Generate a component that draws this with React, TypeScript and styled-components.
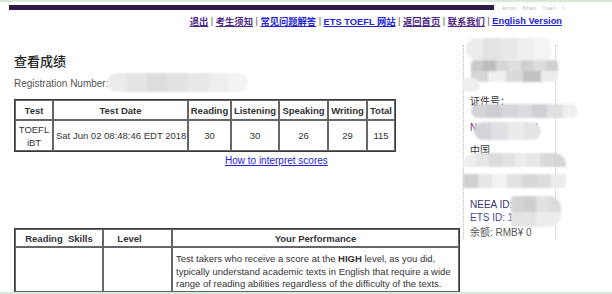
import React from 'react';
import styled, { createGlobalStyle } from 'styled-components';

const GlobalStyle = createGlobalStyle`
  html, body {
    margin: 0;
    padding: 0;
    background: #fff;
  }
  body {
    font-family: "Liberation Sans", Arial, "Noto Sans CJK SC", sans-serif;
    color: #333;
  }
`;

const Frame = styled.div`
  width: 612px;
  height: 294px;
  box-sizing: border-box;
  border-top: 2px solid #d6ead8;
  border-bottom: 2px solid #d6ead8;
  overflow: hidden;
`;

const TopBar = styled.div`
  display: flex;
  align-items: center;
  padding: 3px 0 0 9px;
  height: 5px;
`;

const PurpleBar = styled.div`
  width: 485px;
  height: 5px;
  background: #2e1a47;
`;

const UserText = styled.span`
  margin-left: 8px;
  font-size: 5px;
  color: #b5b5b5;
  letter-spacing: 0.5px;
  word-spacing: 4px;
`;

const Nav = styled.nav`
  display: flex;
  justify-content: flex-end;
  align-items: center;
  margin-top: 4px;
  padding-right: 50px;
  height: 14px;
  font-size: 9.3px;
  font-weight: bold;
  white-space: nowrap;
`;

const NavLink = styled.a<{ $color: string }>`
  color: ${(p) => p.$color};
  text-decoration: underline;
`;

const Sep = styled.span`
  color: #555;
  font-weight: normal;
  margin: 0 2.5px;
`;

const Main = styled.div`
  display: flex;
  align-items: flex-start;
`;

const LeftCol = styled.div`
  width: 463px;
  padding-left: 14px;
  box-sizing: border-box;
`;

const Heading = styled.h1`
  margin: 25px 0 0;
  font-size: 13px;
  line-height: 16px;
  font-weight: 500;
  color: #222;
  font-family: "Noto Sans CJK SC", sans-serif;
`;

const RegLine = styled.div`
  position: relative;
  margin-top: 9px;
  font-size: 10px;
  line-height: 12px;
  color: #555;
`;

const Blob = styled.div<{ $x: number; $y: number; $w: number; $h: number; $r?: string }>`
  position: absolute;
  left: ${(p) => p.$x}px;
  top: ${(p) => p.$y}px;
  width: ${(p) => p.$w}px;
  height: ${(p) => p.$h}px;
  display: flex;
  flex-wrap: wrap;
  border-radius: ${(p) => p.$r || '8px'};
  overflow: hidden;
  filter: blur(1.2px);
`;

const Tile = styled.div<{ $c: string; $rows: number }>`
  flex: 1 0 auto;
  min-width: 12px;
  height: ${(p) => 100 / p.$rows}%;
  background: ${(p) => p.$c};
`;

const ScoreTable = styled.table`
  margin-top: 9px;
  width: 380px;
  table-layout: fixed;
  border-collapse: separate;
  border-spacing: 0;
  border: 1px solid #3a3a3a;
  font-size: 9.5px;
  color: #333;
`;

const Col = styled.col<{ $w: number }>`
  width: ${(p) => p.$w}px;
`;

const Th = styled.th<{ $h?: number; $pr?: number }>`
  border: 1px solid #666;
  height: ${(p) => p.$h || 16}px;
  padding: 0 ${(p) => p.$pr || 0}px 0 0;
  font-weight: bold;
  text-align: center;
  white-space: nowrap;
`;

const Td = styled.td<{ $h?: number; $align?: string }>`
  border: 1px solid #666;
  height: ${(p) => p.$h || 29}px;
  padding: 0 2px;
  text-align: ${(p) => p.$align || 'center'};
  line-height: 13px;
  white-space: nowrap;
`;

const LinkRow = styled.div`
  margin-top: 3px;
  padding-left: 211px;
  font-size: 10px;
  line-height: 12px;
`;

const BlueLink = styled.a`
  color: #2323d6;
  text-decoration: underline;
`;

const SkillTable = styled(ScoreTable)`
  margin-top: 61px;
  width: 444px;
`;

const TextCell = styled.td`
  border: 1px solid #666;
  padding: 5px 3px 0;
  vertical-align: top;
  line-height: 12.5px;
  white-space: nowrap;
`;

const Sidebar = styled.aside`
  position: relative;
  margin-top: 17px;
  width: 93px;
  padding-left: 6px;
  box-sizing: border-box;
  border-left: 1px dotted #bdbdbd;
  border-right: 1px dotted #bdbdbd;
  font-size: 10px;
  line-height: 13px;
  font-family: "Liberation Sans", Arial, "Noto Sans CJK SC", sans-serif;
`;

const SideLine = styled.div<{ $mt: number; $color?: string }>`
  margin-top: ${(p) => p.$mt}px;
  color: ${(p) => p.$color || '#333'};
  white-space: nowrap;
`;

type BlobSpec = { x: number; y: number; w: number; h: number; r?: string; rows: number; tiles: string[] };

const sideBlobs: BlobSpec[] = [
  { x: 2, y: -7, w: 85, h: 22, r: '11px 4px 4px 11px', rows: 1, tiles: ['#ececec', '#e3e3e3', '#e8e8e8', '#efefef', '#f4f4f4'] },
  { x: 7, y: 15, w: 87, h: 22, r: '4px', rows: 2, tiles: ['#cbcbcb', '#bdbdbd', '#d6d6d6', '#dedede', '#d0d0d0', '#dcdcdc', '#d0d0d0', '#d6d6d6', '#f0f0f0', '#dadada', '#c2c2c2', '#ececec'] },
  { x: -2, y: 33, w: 18, h: 14, r: '7px', rows: 1, tiles: ['#eeeeee'] },
  { x: 7, y: 59, w: 107, h: 14, r: '7px', rows: 1, tiles: ['#d5d3d8', '#cfcdd3', '#d8d6db', '#dcdade', '#d2d0d6', '#e0dfe2', '#efefef'] },
  { x: 10, y: 77, w: 67, h: 18, r: '9px', rows: 1, tiles: ['#d6d4d8', '#e0dfe3', '#ebeaec', '#e4e3e6'] },
  { x: -1, y: 108, w: 103, h: 42, r: '12px', rows: 3, tiles: ['#efefef', '#e6e6e6', '#dcdcdc', '#e2e2e2', '#ececec', '#e8e8e8', '#dadada', '#d6d6d6', '#d0d0d0', '#e6e6e6', '#f2f2f2', '#e2e2e2', '#d8d8d8', '#dcdcdc', '#ececec'] },
  { x: 47, y: 151, w: 50, h: 31, r: '4px 12px 12px 4px', rows: 2, tiles: ['#d4d4d4', '#cfcfcf', '#e2e2e2', '#dcdcdc', '#e4e4e4', '#ececec'] },
];

const regBlob: BlobSpec = {
  x: 93, y: -5, w: 141, h: 19, r: '10px', rows: 1,
  tiles: ['#ececec', '#e4e4e4', '#dddddd', '#e2e2e2', '#e8e8e8', '#eeeeee', '#f3f3f3'],
};

const Mosaic: React.FC<{ spec: BlobSpec }> = ({ spec }) => (
  <Blob $x={spec.x} $y={spec.y} $w={spec.w} $h={spec.h} $r={spec.r}>
    {spec.tiles.map((c, i) => (
      <Tile key={i} $c={c} $rows={spec.rows} />
    ))}
  </Blob>
);

const PURPLE = '#4e2a84';
const BLUE = '#2222d8';

const navItems = [
  { text: '退出', color: PURPLE },
  { text: '考生须知', color: PURPLE },
  { text: '常见问题解答', color: BLUE },
  { text: 'ETS TOEFL 网站', color: BLUE },
  { text: '返回首页', color: PURPLE },
  { text: '联系我们', color: PURPLE },
  { text: 'English Version', color: BLUE },
];

export default function App() {
  return (
    <Frame>
      <GlobalStyle />
      <TopBar>
        <PurpleBar />
        <UserText>Arron Nhan Yuan &gt;</UserText>
      </TopBar>
      <Nav>
        {navItems.map((item, i) => (
          <React.Fragment key={item.text}>
            {i > 0 && <Sep>|</Sep>}
            <NavLink $color={item.color}>{item.text}</NavLink>
          </React.Fragment>
        ))}
      </Nav>
      <Main>
        <LeftCol>
          <Heading>查看成绩</Heading>
          <RegLine>
            Registration Number:
            <Mosaic spec={regBlob} />
          </RegLine>
          <ScoreTable>
            <colgroup>
              <Col $w={38} />
              <Col $w={135} />
              <Col $w={43} />
              <Col $w={48} />
              <Col $w={49} />
              <Col $w={39} />
              <Col $w={28} />
            </colgroup>
            <thead>
              <tr>
                <Th $h={18}>Test</Th>
                <Th $h={18}>Test Date</Th>
                <Th $h={18}>Reading</Th>
                <Th $h={18}>Listening</Th>
                <Th $h={18}>Speaking</Th>
                <Th $h={18}>Writing</Th>
                <Th $h={18}>Total</Th>
              </tr>
            </thead>
            <tbody>
              <tr>
                <Td>
                  TOEFL
                  <br />
                  iBT
                </Td>
                <Td>Sat Jun 02 08:48:46 EDT 2018</Td>
                <Td>30</Td>
                <Td>30</Td>
                <Td>26</Td>
                <Td>29</Td>
                <Td>115</Td>
              </tr>
            </tbody>
          </ScoreTable>
          <LinkRow>
            <BlueLink>How to interpret scores</BlueLink>
          </LinkRow>
          <SkillTable>
            <colgroup>
              <Col $w={88} />
              <Col $w={69} />
              <Col $w={287} />
            </colgroup>
            <thead>
              <tr>
                <Th $h={16}>Reading&nbsp;&nbsp;Skills</Th>
                <Th $h={16} $pr={16}>Level</Th>
                <Th $h={16}>Your Performance</Th>
              </tr>
            </thead>
            <tbody>
              <tr>
                <TextCell />
                <TextCell />
                <TextCell>
                  Test takers who receive a score at the <b>HIGH</b> level, as you did,
                  <br />
                  typically understand academic texts in English that require a wide
                  <br />
                  range of reading abilities regardless of the difficulty of the texts.
                </TextCell>
              </tr>
            </tbody>
          </SkillTable>
        </LeftCol>
        <Sidebar>
          <SideLine $mt={49.5}>证件号：</SideLine>
          <SideLine $mt={13} $color="#5a3a8a">N&nbsp;&nbsp;xxxxxxxxxx&nbsp;l</SideLine>
          <SideLine $mt={10}>中国</SideLine>
          <SideLine $mt={41} $color="#3b3470">NEEA ID: 0000000</SideLine>
          <SideLine $mt={0} $color="#4a4298">ETS ID: 1000000</SideLine>
          <SideLine $mt={2} $color="#555">余额:&nbsp;RMB¥ 0</SideLine>
          {sideBlobs.map((b, i) => (
            <Mosaic key={i} spec={b} />
          ))}
        </Sidebar>
      </Main>
    </Frame>
  );
}
